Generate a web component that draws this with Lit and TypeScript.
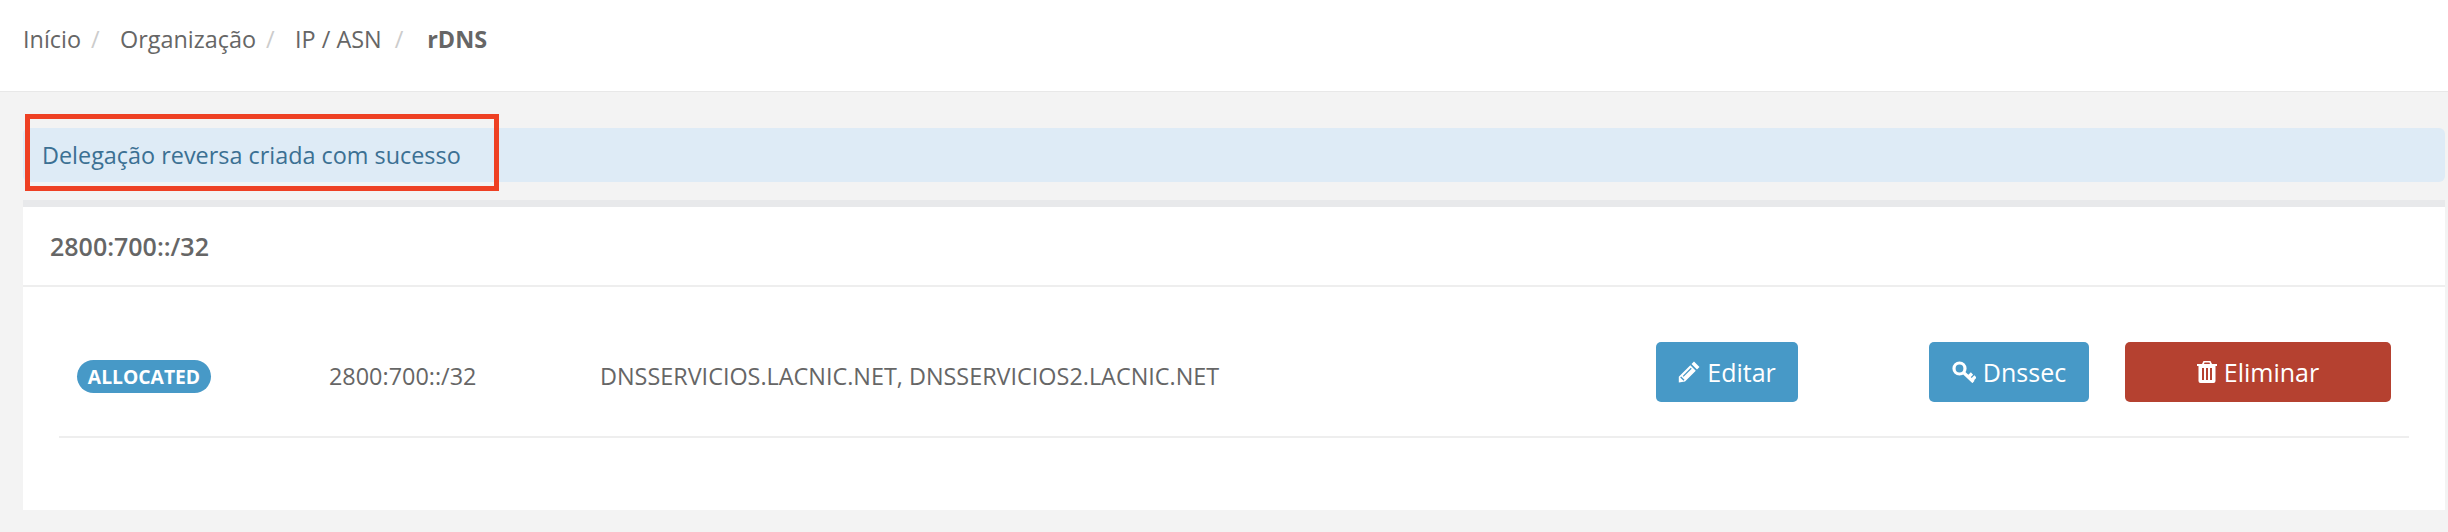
import { LitElement, css, html } from "lit";
import { customElement } from "lit/decorators.js";

const pencil = html`<svg class="icon" width="22" height="22" viewBox="0 0 22 22"><path fill="currentColor" fill-rule="evenodd" d="M16 0.500 21.500 6 19 8.500 13.500 3ZM12.300 4.200 17.800 9.700 7 20.500 0.800 21.500 0.800 15.700ZM3.200 15.500 2.200 16.500 5.500 19.800 6.500 18.800ZM12.800 6.800 4.700 14.900 5.600 15.800 13.700 7.700Z"/></svg>`;
const key = html`<svg class="icon" width="24" height="22" viewBox="0 0 24 22"><g fill="none" stroke="currentColor" stroke-width="3.200"><circle cx="7.500" cy="7.500" r="5.500"/><path d="M11.500 11.500 21.500 21M16.500 16 20 12.500M20 19 23.500 15.500"/></g></svg>`;
const trash = html`<svg class="icon" width="20" height="22" viewBox="0 0 20 22"><path fill="currentColor" fill-rule="evenodd" d="M6.500 0h7L15 3h5V5H18.500V20a2 2 0 0 1-2 2H3.500a2 2 0 0 1-2-2V5H0V3h5ZM7.500 1.500 7 3h6L12.500 1.500ZM5 7v12H7V7ZM9 7v12h2V7ZM13 7v12h2V7Z"/></svg>`;

@customElement("app-root")
export class AppRoot extends LitElement {
  static styles = css`
    :host {
      display: block;
      position: relative;
      height: 532px;
      overflow: hidden;
      background: #f3f3f3;
      color: #666;
      font-family: "Open Sans", sans-serif;
      font-size: 23.4px;
    }

    .topbar {
      display: flex;
      align-items: center;
      height: 92px;
      padding: 0 0 14px 23px;
      box-sizing: border-box;
      background: #fff;
      border-bottom: 1px solid #e8e8e8;
    }

    .crumb-sep {
      color: #ccc;
      margin: 0 20.5px 0 10px;
    }

    .crumb-sep.last {
      margin: 0 24px 0 13px;
    }

    .crumb-active {
      font-weight: 700;
    }

    .content {
      padding: 36px 3px 0 23px;
    }

    .alert {
      display: flex;
      align-items: center;
      height: 54px;
      padding-left: 19px;
      border-radius: 6px;
      background: #deebf6;
      color: #3b7093;
    }

    .card {
      margin-top: 18px;
      height: 310px;
      background: #fff;
      border-top: 7px solid #e8e9eb;
      box-sizing: border-box;
    }

    .card-head {
      display: flex;
      align-items: center;
      height: 80px;
      padding-left: 27px;
      font-size: 25px;
      font-weight: 600;
      border-bottom: 2px solid #eee;
      box-sizing: border-box;
    }

    .row {
      display: flex;
      align-items: center;
      height: 151px;
      margin: 0 36px;
      padding-top: 20px;
      border-bottom: 2px solid #eee;
      box-sizing: border-box;
    }

    .badge {
      margin: 9px 0 0 18px;
      width: 134px;
      height: 33px;
      line-height: 33px;
      border-radius: 17px;
      background: #4799c7;
      color: #fff;
      font-size: 19.3px;
      font-weight: 700;
      text-align: center;
    }

    .prefix {
      margin: 9px 0 0 118px;
      width: 271px;
    }

    .servers {
      margin-top: 9px;
      width: 1056px;
    }

    .btn {
      display: flex;
      align-items: center;
      justify-content: center;
      gap: 7px;
      height: 60px;
      border-radius: 5px;
      background: #4799c7;
      color: #fff;
      font-size: 25px;
    }

    .edit {
      width: 142px;
    }

    .dnssec {
      width: 160px;
      margin-left: 131px;
    }

    .delete {
      width: 266px;
      margin-left: 36px;
      background: #b54130;
    }

    .highlight {
      position: absolute;
      left: 25px;
      top: 114px;
      width: 474px;
      height: 77px;
      box-sizing: border-box;
      border: 5px solid #ee4023;
    }
  `;

  render() {
    return html`
      <div class="topbar">
        <span>Início</span><span class="crumb-sep">/</span>
        <span>Organização</span><span class="crumb-sep">/</span>
        <span>IP / ASN</span><span class="crumb-sep last">/</span>
        <span class="crumb-active">rDNS</span>
      </div>
      <div class="content">
        <div class="alert">Delegação reversa criada com sucesso</div>
        <div class="card">
          <div class="card-head">2800:700::/32</div>
          <div class="row">
            <span class="badge">ALLOCATED</span>
            <span class="prefix">2800:700::/32</span>
            <span class="servers">DNSSERVICIOS.LACNIC.NET, DNSSERVICIOS2.LACNIC.NET</span>
            <span class="btn edit">${pencil} Editar</span>
            <span class="btn dnssec">${key} Dnssec</span>
            <span class="btn delete">${trash} Eliminar</span>
          </div>
        </div>
      </div>
      <div class="highlight"></div>
    `;
  }
}
